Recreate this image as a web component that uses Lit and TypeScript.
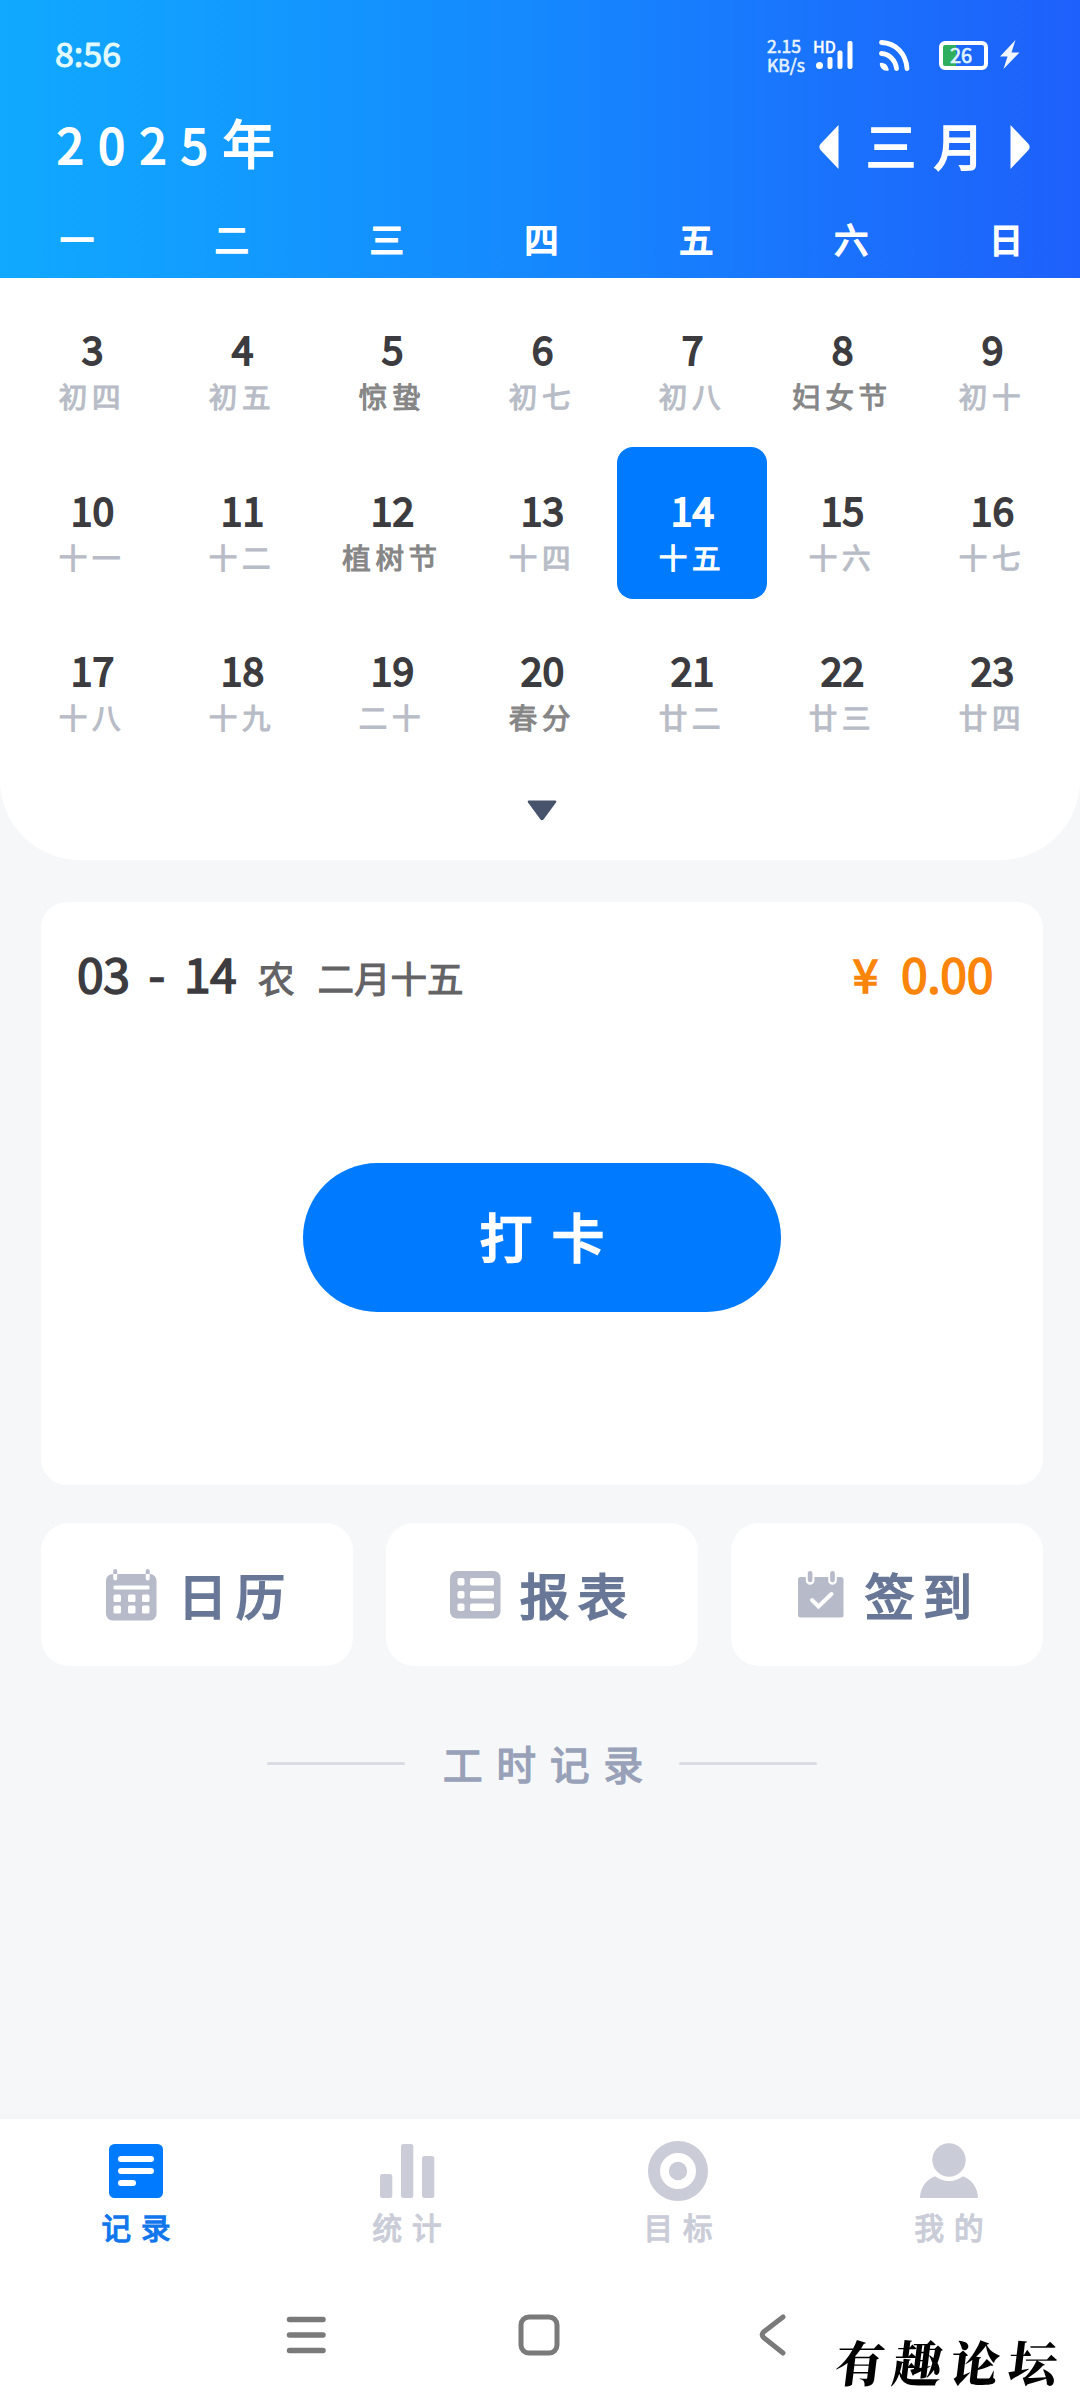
import { LitElement, html, css, svg } from "lit";
import { customElement, property } from "lit/decorators.js";
import { classMap } from "lit/directives/class-map.js";

interface Day {
  n: number;
  lunar: string;
  festival?: boolean;
}

const lunarNames =
  "初四 初五 惊蛰 初七 初八 妇女节 初十 十一 十二 植树节 十四 十五 十六 十七 十八 十九 二十 春分 廿二 廿三 廿四".split(" ");
const festivals = new Set(["惊蛰", "妇女节", "植树节", "春分"]);
const days: Day[] = lunarNames.map((lunar, i) => ({ n: i + 3, lunar, festival: festivals.has(lunar) }));
const weekdays = ["一", "二", "三", "四", "五", "六", "日"];

const icons: Record<string, unknown> = {
  calendar: svg`<svg width="51" height="52" viewBox="0 0 51 52">
    <rect x="0" y="5" width="50.500" height="46.500" rx="6.500" fill="#b6bac9"/>
    <g fill="#fff"><path d="M7.200 5h4v4.500a2 2 0 0 1-4 0zM39.700 5h4v4.500a2 2 0 0 1-4 0z"/>
    <rect x="7.500" y="16.500" width="36" height="4" rx="1.200"/>
    <rect x="7.500" y="25.500" width="7.500" height="7.500" rx="1.500"/><rect x="22" y="25.500" width="7.500" height="7.500" rx="1.500"/><rect x="36" y="25.500" width="7.500" height="7.500" rx="1.500"/>
    <rect x="7.500" y="36.500" width="7.500" height="8" rx="1.500"/><rect x="22" y="36.500" width="7.500" height="8" rx="1.500"/><rect x="36" y="36.500" width="7.500" height="8" rx="1.500"/></g>
    <path d="M7.200 5V2a2 2 0 0 1 4 0V5zM39.700 5V2a2 2 0 0 1 4 0V5z" fill="#b6bac9"/></svg>`,
  report: svg`<svg width="51" height="48" viewBox="0 0 51 48">
    <rect width="50.500" height="47.500" rx="7" fill="#b6bac9"/>
    <g fill="#fff"><rect x="7.500" y="7" width="7" height="7.500" rx="1.800"/><rect x="20" y="7" width="24" height="7.500" rx="1.800"/>
    <rect x="7.500" y="20" width="7" height="7.500" rx="1.800"/><rect x="20" y="20" width="24" height="7.500" rx="1.800"/>
    <rect x="7.500" y="32.500" width="7" height="7.500" rx="1.800"/><rect x="20" y="32.500" width="24" height="7.500" rx="1.800"/></g></svg>`,
  sign: svg`<svg width="46" height="47" viewBox="0 0 46 47">
    <rect y="6" width="45.500" height="40.500" rx="2.500" fill="#b6bac9"/>
    <path d="M7.800 5v4.500a4.300 4.300 0 0 0 8.600 0V5zM30.200 5v4.500a4.300 4.300 0 0 0 8.600 0V5z" fill="#fff"/>
    <g fill="#b6bac9"><rect x="9.800" y="0" width="4.600" height="11.200" rx="2.300"/><rect x="32.200" y="0" width="4.600" height="11.200" rx="2.300"/></g>
    <path d="M14 29l6.500 6.500L33.500 23" fill="none" stroke="#fff" stroke-width="4" stroke-linecap="round" stroke-linejoin="miter"/></svg>`,
  record: svg`<svg width="60" height="60" viewBox="0 0 60 60"><rect x="3" y="3" width="54" height="54" rx="5.500" fill="#007aff"/>
    <path d="M15 18h30M15 30h30M15 42h12" stroke="#fff" stroke-width="6" stroke-linecap="round"/></svg>`,
  stats: svg`<svg width="60" height="60" viewBox="0 0 60 60" fill="#cacdd8"><rect x="3" y="33" width="12.300" height="24" rx="2.500"/><rect x="24" y="3" width="12.300" height="54" rx="2.500"/><rect x="45" y="15" width="12.300" height="42" rx="2.500"/></svg>`,
  target: svg`<svg width="60" height="60" viewBox="0 0 60 60"><circle cx="30" cy="30" r="24" fill="none" stroke="#cacdd8" stroke-width="12"/><circle cx="30" cy="30" r="9.200" fill="#cacdd8"/></svg>`,
  mine: svg`<svg width="60" height="60" viewBox="0 0 60 60" fill="#cacdd8"><circle cx="30" cy="19" r="16.700"/><path d="M1 57C1 47 7 38.500 16 35.200C24 41.500 36 41.500 44 35.200C53 38.500 59 47 59 57Z"/></svg>`,
};

@customElement("day-cell")
class DayCell extends LitElement {
  @property({ attribute: false }) day!: Day;
  @property({ type: Boolean }) selected = false;
  static styles = css`
    :host { display: block; height: 152px; }
    .cell { box-sizing: border-box; height: 152px; padding-top: 37px; border-radius: 16px; text-align: center; white-space: nowrap; }
    .num { font-size: 39px; line-height: 50px; padding-left: 1px; color: #3c3c40; -webkit-text-stroke: 1.8px currentColor; }
    .lunar { margin-top: 3px; font-size: 28.5px; line-height: 40px; letter-spacing: 4.700px; color: #b8bcc6; -webkit-text-stroke: 1.1px currentColor; }
    .festival { color: #868686; }
    .selected { background: #007aff; }
    .selected .num, .selected .lunar { color: #fff; }
  `;
  render() {
    return html`<div class=${classMap({ cell: true, selected: this.selected })}>
      <div class="num">${this.day.n}</div>
      <div class=${classMap({ lunar: true, festival: !!this.day.festival })}>${this.day.lunar}</div>
    </div>`;
  }
}

@customElement("app-root")
class AppRoot extends LitElement {
  static styles = css`
    :host { display: block; width: 1080px; height: 2400px; overflow: hidden; background: #f5f7f9; font-family: "Noto Sans CJK SC", "Noto Sans", sans-serif; }
    .page { display: flex; flex-direction: column; height: 2400px; }
    svg { display: block; flex: none; }
    .header { height: 278px; color: #fff; background: linear-gradient(90deg, #10a9ff 0%, #1588fe 50%, #1e60fb 100%); }
    .status { box-sizing: border-box; display: flex; height: 104px; padding: 6px 0 0 55px; align-items: center; }
    .clock { flex: none; font-size: 34px; width: 712px; margin-top: -6px; color: #e2faff; -webkit-text-stroke: 1px currentColor; }
    .rate { flex: none; width: 46px; font-size: 17.5px; line-height: 19px; white-space: nowrap; color: #e6f2ff; -webkit-text-stroke: 0.6px currentColor; }
    .signal { flex: none; display: grid; width: 42px; margin-right: 24px; }
    .signal > * { grid-area: 1 / 1; }
    .hd { justify-self: start; font-size: 16px; line-height: 16px; margin-top: -2px; -webkit-text-stroke: 0.6px currentColor; }
    .wifi { margin-right: 29px; }
    .battery { flex: none; box-sizing: border-box; width: 49px; height: 29px; margin-right: 12px; border: 4px solid #fff; border-radius: 6px; background: linear-gradient(90deg, #2fae5d 13px, transparent 13px); font-size: 20px; line-height: 19px; text-align: center; color: #e0f4ff; -webkit-text-stroke: 0.7px currentColor; }
    .battery span { display: block; margin-left: -5px; }
    .title { display: flex; align-items: center; height: 78px; padding: 0 50px 0 57px; -webkit-text-stroke: 2px currentColor; }
    .year { flex: 1; font-size: 48px; letter-spacing: 14.700px; white-space: nowrap; line-height: 74px; margin-top: -1px; }
    .year b { font-weight: 400; font-size: 52px; letter-spacing: 0; }
    .month { font-size: 50px; letter-spacing: 18px; margin: 2px 8px 0 27px; }
    .arrow { margin-top: 7px; }
    .week { display: flex; justify-content: space-between; box-sizing: border-box; height: 96px; padding: 17px 57px 0 60px; align-items: center; font-size: 34px; -webkit-text-stroke: 1.8px currentColor; }
    .sheet { box-sizing: border-box; height: 582px; padding: 8px 13px 0 17px; background: #fff; border-radius: 0 0 80px 80px; display: flex; flex-direction: column; align-items: center; gap: 41px; }
    .grid { display: grid; grid-template-columns: repeat(7, 150px); row-gap: 8.700px; }
    .main { flex: 1; padding: 42px 37px 0 41px; display: flex; flex-direction: column; }
    .card { box-sizing: border-box; height: 583px; border-radius: 26px; background: #fff; padding: 36px 50px 0 36px; }
    .summary { display: flex; align-items: baseline; height: 68px; line-height: 68px; white-space: pre; -webkit-text-stroke: 1.6px currentColor; color: #3c3c40; font-size: 48px; }
    .date { width: 181px; word-spacing: 9px; letter-spacing: -0.5px; }
    .lunar-date { flex: 1; font-size: 36.5px; color: #636366; -webkit-text-stroke-width: 1.1px; }
    .lunar-date span { margin-left: 23px; }
    .amount { color: #fa850a; letter-spacing: -0.3px; }
    .amount span { font-size: 46px; margin-right: 23px; }
    .punch { width: 478px; height: 149px; margin: 157px auto 0 226px; border-radius: 75px; background: #007aff; color: #fff; font-size: 52px; line-height: 145px; text-align: center; text-indent: 20px; letter-spacing: 20px; -webkit-text-stroke: 2.6px currentColor; }
    .shortcuts { display: grid; grid-template-columns: repeat(3, 312px); gap: 33px; margin-top: 38px; }
    .shortcut { height: 143px; border-radius: 28px; background: #fff; display: flex; align-items: center; box-sizing: border-box; padding: 0 0 0 64px; color: #697797; font-size: 49px; line-height: 137px; letter-spacing: 9px; -webkit-text-stroke: 2.2px currentColor; white-space: nowrap; }
    .shortcut:last-child { padding-left: 67px; }
    .shortcut span { margin: -3px 0 0 19px; }
    .shortcut:first-child span, .shortcut:last-child span { margin-left: 21px; }
    .shortcut:first-child { padding-left: 65px; }
    .divider { display: flex; align-items: center; margin: 67px 0 0 226px; color: #98a1b8; font-size: 39.5px; line-height: 60px; letter-spacing: 14px; -webkit-text-stroke: 1.5px currentColor; }
    .divider i { width: 138px; height: 3px; border-radius: 2px; background: #dadde4; margin-top: 1px; }
    .divider span { margin: 0 22px 0 38px; }
    .tabs { box-sizing: border-box; height: 164px; background: #fff; border-top: 5px solid #f3f5f7; display: grid; grid-template-columns: repeat(4, 271px); padding-top: 22px; flex: none; }
    .tab { display: flex; flex-direction: column; align-items: center; color: #cacdd8; font-size: 29.5px; line-height: 44px; letter-spacing: 10px; text-indent: 11px; -webkit-text-stroke: 1.3px currentColor; }
    .tab span { margin-top: 3px; }
    .active { color: #1276ec; }
    .nav { box-sizing: border-box; height: 122px; flex: none; background: #fff; display: flex; padding: 36px 0 0 286px; }
    .nav svg:nth-child(1) { margin-right: 191px; }
    .nav svg:nth-child(2) { margin-right: 198px; }
    .brand { margin: 9px 0 0 50px; height: 76px; font-size: 49px; line-height: 76px; font-weight: 900; letter-spacing: 8.500px; color: #000; white-space: nowrap; transform: skewX(-7deg); font-family: "KaiTi", "STXingkai", "Noto Serif CJK SC", "Noto Sans CJK SC", serif; }
  `;

  private tab(icon: string, label: string, active = false) {
    return html`<div class=${classMap({ tab: true, active })}>${icons[icon]}<span>${label}</span></div>`;
  }

  private shortcut(icon: string, label: string) {
    return html`<div class="shortcut">${icons[icon]}<span>${label}</span></div>`;
  }

  render() {
    return html`<div class="page">
      <div class="header">
        <div class="status">
          <div class="clock">8:56</div>
          <div class="rate">2.15<br />KB/s</div>
          <div class="signal">
            <div class="hd">HD</div>
            <svg width="42" height="30" viewBox="0 0 42 30" fill="#fff"><circle cx="6.500" cy="25.500" r="3.500"/><rect x="14.500" y="17" width="5" height="12" rx="2"/><rect x="24.500" y="10.500" width="5" height="18.500" rx="2"/><rect x="34.500" y="1" width="5" height="28" rx="2"/></svg>
          </div>
          <svg class="wifi" width="31" height="31" viewBox="0 0 31 31" fill="none" stroke="#fff" stroke-width="4.800" stroke-linecap="round"><path d="M2.500 2.500C17 3 27 14 28 28.500M2.500 13.500C10 14 16.500 20 17.500 28.500"/><path d="M2 24c3.500 0 5.500 2 6.500 5.500c-3.500 0-6-2-6.500-5.500z" fill="#fff" stroke-width="2.500" stroke-linejoin="round"/></svg>
          <div class="battery"><span>26</span></div>
          <svg width="20" height="30" viewBox="0 0 20 30"><path d="M15.500 0L0 16.500h7.500L3.500 29L19.500 12.500h-8z" fill="#f0f5ff"/></svg>
        </div>
        <div class="title">
          <div class="year">2025<b>年</b></div>
          <svg class="arrow" width="20" height="44" viewBox="0 0 20 44"><path d="M19.500 0V44L1.500 25Q-.8 22 1.500 19Z" fill="#fff"/></svg>
          <div class="month">三月</div>
          <svg class="arrow" width="20" height="44" viewBox="0 0 20 44"><path d="M.5 0V44L18.500 25Q20.800 22 18.500 19Z" fill="#fff"/></svg>
        </div>
        <div class="week">${weekdays.map((d) => html`<span>${d}</span>`)}</div>
      </div>
      <div class="sheet">
        <div class="grid">${days.map((d) => html`<day-cell .day=${d} ?selected=${d.n === 14}></day-cell>`)}</div>
        <svg width="30" height="21" viewBox="0 0 30 21"><path d="M1.500 .5H28.500Q30 1 29 2.500L16.500 19.500Q15 21 13.500 19.500L1 2.500Q0 1 1.500 .5Z" fill="#46536b"/></svg>
      </div>
      <div class="main">
        <div class="card">
          <div class="summary">
            <div class="date">03 - 14</div>
            <div class="lunar-date">农<span>二月十五</span></div>
            <div class="amount"><span>¥</span>0.00</div>
          </div>
          <div class="punch">打卡</div>
        </div>
        <div class="shortcuts">
          ${this.shortcut("calendar", "日历")}${this.shortcut("report", "报表")}${this.shortcut("sign", "签到")}
        </div>
        <div class="divider"><i></i><span>工时记录</span><i></i></div>
      </div>
      <div class="tabs">
        ${this.tab("record", "记录", true)}${this.tab("stats", "统计")}${this.tab("target", "目标")}${this.tab("mine", "我的")}
      </div>
      <div class="nav">
        <svg width="41" height="42" viewBox="0 0 41 42" stroke="#7a7a7a" stroke-width="5.500" stroke-linecap="round"><path d="M3.500 5.500H37M3.500 21H37M3.500 36.500H37"/></svg>
        <svg width="42" height="42" viewBox="0 0 42 42" fill="none" stroke="#7a7a7a" stroke-width="5"><rect x="3" y="3" width="36" height="36" rx="8"/></svg>
        <svg width="28" height="42" viewBox="0 0 28 42" fill="none" stroke="#7a7a7a" stroke-width="5" stroke-linecap="round"><path d="M25 3L5.500 18Q3 20.500 5.500 23.500L25 39"/></svg>
        <div class="brand">有趣论坛</div>
      </div>
    </div>`;
  }
}
